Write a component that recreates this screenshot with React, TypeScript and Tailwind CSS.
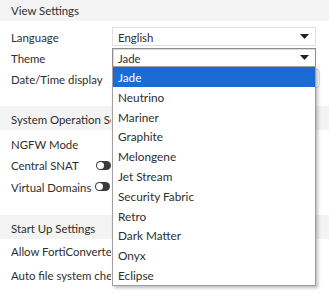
import React from 'react'

const THEMES = [
  'Jade',
  'Neutrino',
  'Mariner',
  'Graphite',
  'Melongene',
  'Jet Stream',
  'Security Fabric',
  'Retro',
  'Dark Matter',
  'Onyx',
  'Eclipse',
]

const Caret = () => (
  <svg width="9" height="5" viewBox="0 0 9 5" className="shrink-0">
    <path d="M0 0h9L4.5 5z" fill="#222" />
  </svg>
)

// labels that sit behind the open list are clipped at its left edge
const Clip: React.FC<{ children: React.ReactNode; w?: string }> = ({ children, w = 'w-[100px]' }) => (
  <div className={`${w} overflow-hidden whitespace-nowrap pt-[2px]`}>{children}</div>
)

const SectionHeader: React.FC<{ title: string }> = ({ title }) => (
  <div className="h-[24px] bg-[#f3f3f3] pl-[11px] flex items-center pt-[1px]">
    <Clip>{title}</Clip>
  </div>
)

const SelectBox: React.FC<{ value: string; active?: boolean; wide?: boolean }> = ({ value, active, wide }) => (
  <div
    className={`h-[19px] ${wide ? 'w-[208px] rounded-r-[3px]' : 'w-[204px]'} bg-white border flex items-center justify-between pl-[5px] pr-[6px] ${
      active ? 'border-[#8c8c8c] shadow-[inset_1px_1px_1px_rgba(0,0,0,0.15)]' : 'border-[#e0e0e0]'
    }`}
  >
    <span className="pt-[2px]">{value}</span>
    <Caret />
  </div>
)

const Toggle = () => (
  <div className="w-[15px] h-[9px] rounded-full bg-[#3a3a3a] relative shrink-0">
    <div className="absolute left-[1px] top-[1px] w-[7px] h-[7px] rounded-full bg-white" />
  </div>
)

export default function App() {
  return (
    <div
      className="w-[329px] h-[296px] overflow-hidden bg-white text-[11.4px] text-[#2e2e2e] relative"
      style={{ fontFamily: 'Lato, "Open Sans", sans-serif' }}
    >
      <div className="mt-[-3px]">
        <SectionHeader title="View Settings" />
        <div className="pt-[5px] pb-[17px]">
          <div className="h-[21px] flex items-center pl-[11px]">
            <Clip w="w-[101px]">Language</Clip>
            <SelectBox value="English" />
          </div>
          <div className="h-[21px] flex items-center pl-[11px]">
            <Clip w="w-[101px]">Theme</Clip>
            <div className="relative">
              <SelectBox value="Jade" active />
              <div className="absolute left-0 top-[18px] w-[204px] bg-white border border-[#a0a0a0] shadow-[2px_2px_3px_rgba(0,0,0,0.25)] z-10">
                {THEMES.map((t, i) => (
                  <div
                    key={t}
                    className={`h-[19.8px] flex items-center pl-[5px] pt-[2px] whitespace-nowrap text-[11.8px] ${
                      i === 0 ? 'bg-[#1b6bd4] text-white' : ''
                    }`}
                  >
                    {t}
                  </div>
                ))}
              </div>
            </div>
          </div>
          <div className="h-[21px] flex items-center pl-[11px]">
            <Clip w="w-[101px]">Date/Time display</Clip>
            <SelectBox value="" wide />
          </div>
        </div>

        <SectionHeader title="System Operation Settings" />
        <div className="pt-[3px] pb-[18px]">
          <div className="h-[21px] flex items-center pl-[11px]">
            <Clip>NGFW Mode</Clip>
          </div>
          <div className="h-[22px] flex items-center pl-[11px]">
            <Clip w="w-[85px]">Central SNAT</Clip>
            <Toggle />
          </div>
          <div className="h-[21px] flex items-center pl-[11px]">
            <Clip w="w-[84px]">Virtual Domains</Clip>
            <Toggle />
          </div>
        </div>

        <SectionHeader title="Start Up Settings" />
        <div className="pt-[1px] flex flex-col gap-[2px]">
          <div className="h-[22px] flex items-center pl-[11px]">
            <Clip>Allow FortiConverter to migrate configuration</Clip>
          </div>
          <div className="h-[22px] flex items-center pl-[11px]">
            <Clip>Auto file system check</Clip>
          </div>
        </div>
      </div>
    </div>
  )
}
